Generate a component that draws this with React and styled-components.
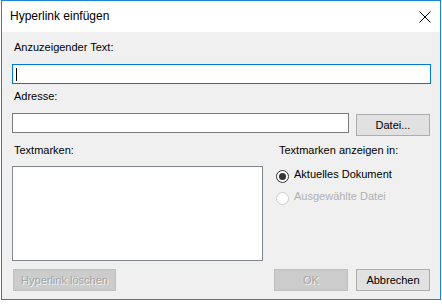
import React from "react";
import styled, { createGlobalStyle } from "styled-components";

const GlobalStyle = createGlobalStyle`
  html, body {
    margin: 0;
    background: #ffffff;
  }
  body {
    font-family: "Liberation Sans", Arial, sans-serif;
    color: #000000;
  }
`;

const Window = styled.div`
  box-sizing: border-box;
  margin-left: 1px;
  width: 440px;
  height: 300px;
  border: 1px solid #1883d7;
  background: #f0f0f0;
  display: flex;
  flex-direction: column;
`;

const TitleBar = styled.div`
  height: 31px;
  flex: none;
  background: #ffffff;
  display: flex;
  align-items: center;
  justify-content: space-between;
  padding: 0 9px 0 8px;
  font-size: 12px;
  line-height: 15px;
`;

const CloseIcon = styled.svg`
  display: block;
  width: 12px;
  height: 12px;
`;

const Body = styled.div`
  flex: 1;
  display: flex;
  flex-direction: column;
  padding: 8px 9px 8px 10px;
  font-size: 11px;
`;

const Label = styled.div`
  line-height: 15px;
  height: 15px;
  padding-left: ${(p) => p.$indent || 0}px;
  margin-top: ${(p) => p.$top || 0}px;
  white-space: nowrap;
`;

const Field = styled.div`
  box-sizing: border-box;
  height: 20px;
  margin-top: ${(p) => p.$top || 0}px;
  flex: ${(p) => (p.$grow ? 1 : "none")};
  background: #ffffff;
  border: 1px solid ${(p) => (p.$focused ? "#0078d7" : "#7a7a7a")};
  display: flex;
  align-items: center;
  padding-left: 3px;
`;

const Caret = styled.span`
  display: block;
  width: 1px;
  height: 13px;
  background: #000000;
`;

const AddressRow = styled.div`
  display: flex;
  align-items: flex-start;
  gap: 7px;
  margin-top: 9px;
  height: 23px;
`;

const Button = styled.div`
  box-sizing: border-box;
  width: ${(p) => p.$width || 74}px;
  height: 22px;
  margin-top: ${(p) => p.$top || 0}px;
  margin-left: ${(p) => p.$left || 0}px;
  margin-right: ${(p) => p.$right || 0}px;
  display: flex;
  align-items: center;
  justify-content: center;
  font-size: 11px;
  white-space: nowrap;
  background: ${(p) => (p.$disabled ? "#cccccc" : "#e1e1e1")};
  border: 1px solid ${(p) => (p.$disabled ? "#bfbfbf" : "#adadad")};
  color: ${(p) => (p.$disabled ? "#a3a3a3" : "#000000")};
  text-shadow: ${(p) => (p.$disabled ? "1px 1px 0 #f4f4f4" : "none")};
`;

const Bookmarks = styled.div`
  display: grid;
  grid-template-columns: 251px 1fr;
  column-gap: 12px;
  margin-top: 7px;
`;

const Column = styled.div`
  display: flex;
  flex-direction: column;
`;

const ListBox = styled.div`
  box-sizing: border-box;
  margin-top: 8px;
  height: 95px;
  background: #ffffff;
  border: 1px solid #828790;
`;

const RadioList = styled.div`
  display: flex;
  flex-direction: column;
  gap: 9px;
  margin-top: 12px;
  padding-left: 1px;
`;

const RadioRow = styled.div`
  display: flex;
  align-items: flex-start;
  gap: 5px;
  height: 13px;
  color: ${(p) => (p.$disabled ? "#b0b0b0" : "#000000")};
`;

const RadioCircle = styled.span`
  box-sizing: border-box;
  width: 13px;
  height: 13px;
  flex: none;
  border-radius: 50%;
  background: #ffffff;
  border: 1px solid ${(p) => (p.$disabled ? "#cccccc" : "#333333")};
  display: flex;
  align-items: center;
  justify-content: center;

  &::after {
    content: "";
    display: ${(p) => (p.$checked ? "block" : "none")};
    width: 7px;
    height: 7px;
    border-radius: 50%;
    background: #333333;
  }
`;

const RadioText = styled.span`
  line-height: 13px;
  margin-top: -2px;
  white-space: nowrap;
`;

const Footer = styled.div`
  display: flex;
  align-items: flex-start;
  gap: 8px;
  margin-top: 8px;
`;

const Spacer = styled.div`
  flex: 1;
`;

const Radio = ({ checked, disabled, children }) => (
  <RadioRow $disabled={disabled}>
    <RadioCircle $checked={checked} $disabled={disabled} />
    <RadioText>{children}</RadioText>
  </RadioRow>
);

export default function App() {
  return (
    <>
      <GlobalStyle />
      <Window>
        <TitleBar>
          <span>Hyperlink einfügen</span>
          <CloseIcon viewBox="0 0 12 12">
            <path d="M0.5 0.5 L11.5 11.5 M11.5 0.5 L0.5 11.5" stroke="#000" strokeWidth="1" fill="none" />
          </CloseIcon>
        </TitleBar>
        <Body>
          <Label $indent={2}>Anzuzeigender Text:</Label>
          <Field $focused $top={9}>
            <Caret />
          </Field>
          <Label $indent={2} $top={5}>Adresse:</Label>
          <AddressRow>
            <Field $grow />
            <Button $top={1} $right={1}>Datei...</Button>
          </AddressRow>
          <Bookmarks>
            <Column>
              <Label $indent={2}>Textmarken:</Label>
              <ListBox />
            </Column>
            <Column>
              <Label $indent={4}>Textmarken anzeigen in:</Label>
              <RadioList>
                <Radio checked>Aktuelles Dokument</Radio>
                <Radio disabled>Ausgewählte Datei</Radio>
              </RadioList>
            </Column>
          </Bookmarks>
          <Footer>
            <Button $disabled $width={103} $left={1}>Hyperlink löschen</Button>
            <Spacer />
            <Button $disabled>OK</Button>
            <Button $right={1}>Abbrechen</Button>
          </Footer>
        </Body>
      </Window>
    </>
  );
}
